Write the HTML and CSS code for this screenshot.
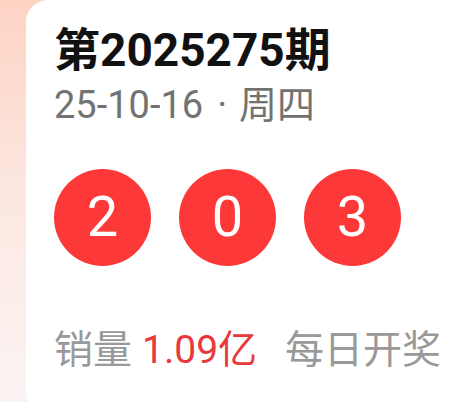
FILE: index.html
```html
<!DOCTYPE html>
<html lang="zh-CN">

<head>
    <meta charset="UTF-8">
    <meta name="viewport" content="width=device-width, initial-scale=1.0">
    <title>福彩3D</title>
    <link rel="stylesheet" href="styles.css">
</head>

<body>
    <div class="page">
        <div class="draw-card">
            <h1 class="draw-title">第2025275期</h1>
            <div class="draw-date">
                <span>25-10-16</span>
                <span class="draw-dot">·</span>
                <span>周四</span>
            </div>
            <div class="draw-balls">
                <span class="ball">2</span>
                <span class="ball">0</span>
                <span class="ball">3</span>
            </div>
            <div class="draw-info">
                <span>销量</span>
                <span class="draw-sales">1.09亿</span>
                <span class="draw-freq">每日开奖</span>
            </div>
        </div>
    </div>
</body>

</html>
```

FILE: styles.css
```css
* {
    margin: 0;
    padding: 0;
    box-sizing: border-box;
}

body {
    font-family: Roboto, "Noto Sans CJK SC", sans-serif;
    background: #fff;
}

.page {
    width: 466px;
    height: 402px;
    overflow: hidden;
    background: linear-gradient(180deg, #fdd3c3 0%, #fce6df 45%, #fbf4f4 100%);
}

.draw-card {
    margin-left: 26px;
    height: 414px;
    background: #fff;
    border-radius: 22px 0 0 22px;
    padding: 22px 0 0 28px;
}

.draw-title {
    font-size: 46px;
    font-weight: 700;
    line-height: 56px;
    color: #111;
}

.draw-date {
    display: flex;
    align-items: baseline;
    margin-top: 5px;
    font-size: 38px;
    line-height: 44px;
    color: #727272;
}

.draw-dot {
    margin: 0 12px 0 14px;
}

.draw-balls {
    display: flex;
    gap: 28px;
    margin-top: 42px;
}

.ball {
    width: 97px;
    height: 97px;
    border-radius: 50%;
    background: #fd3838;
    color: #fff;
    font-size: 56px;
    line-height: 97px;
    text-align: center;
}

.draw-info {
    display: flex;
    align-items: baseline;
    margin-top: 60px;
    font-size: 39px;
    line-height: 48px;
    color: #999;
}

.draw-sales {
    margin-left: 10px;
    color: #e8383b;
}

.draw-freq {
    margin-left: 28px;
}
```
